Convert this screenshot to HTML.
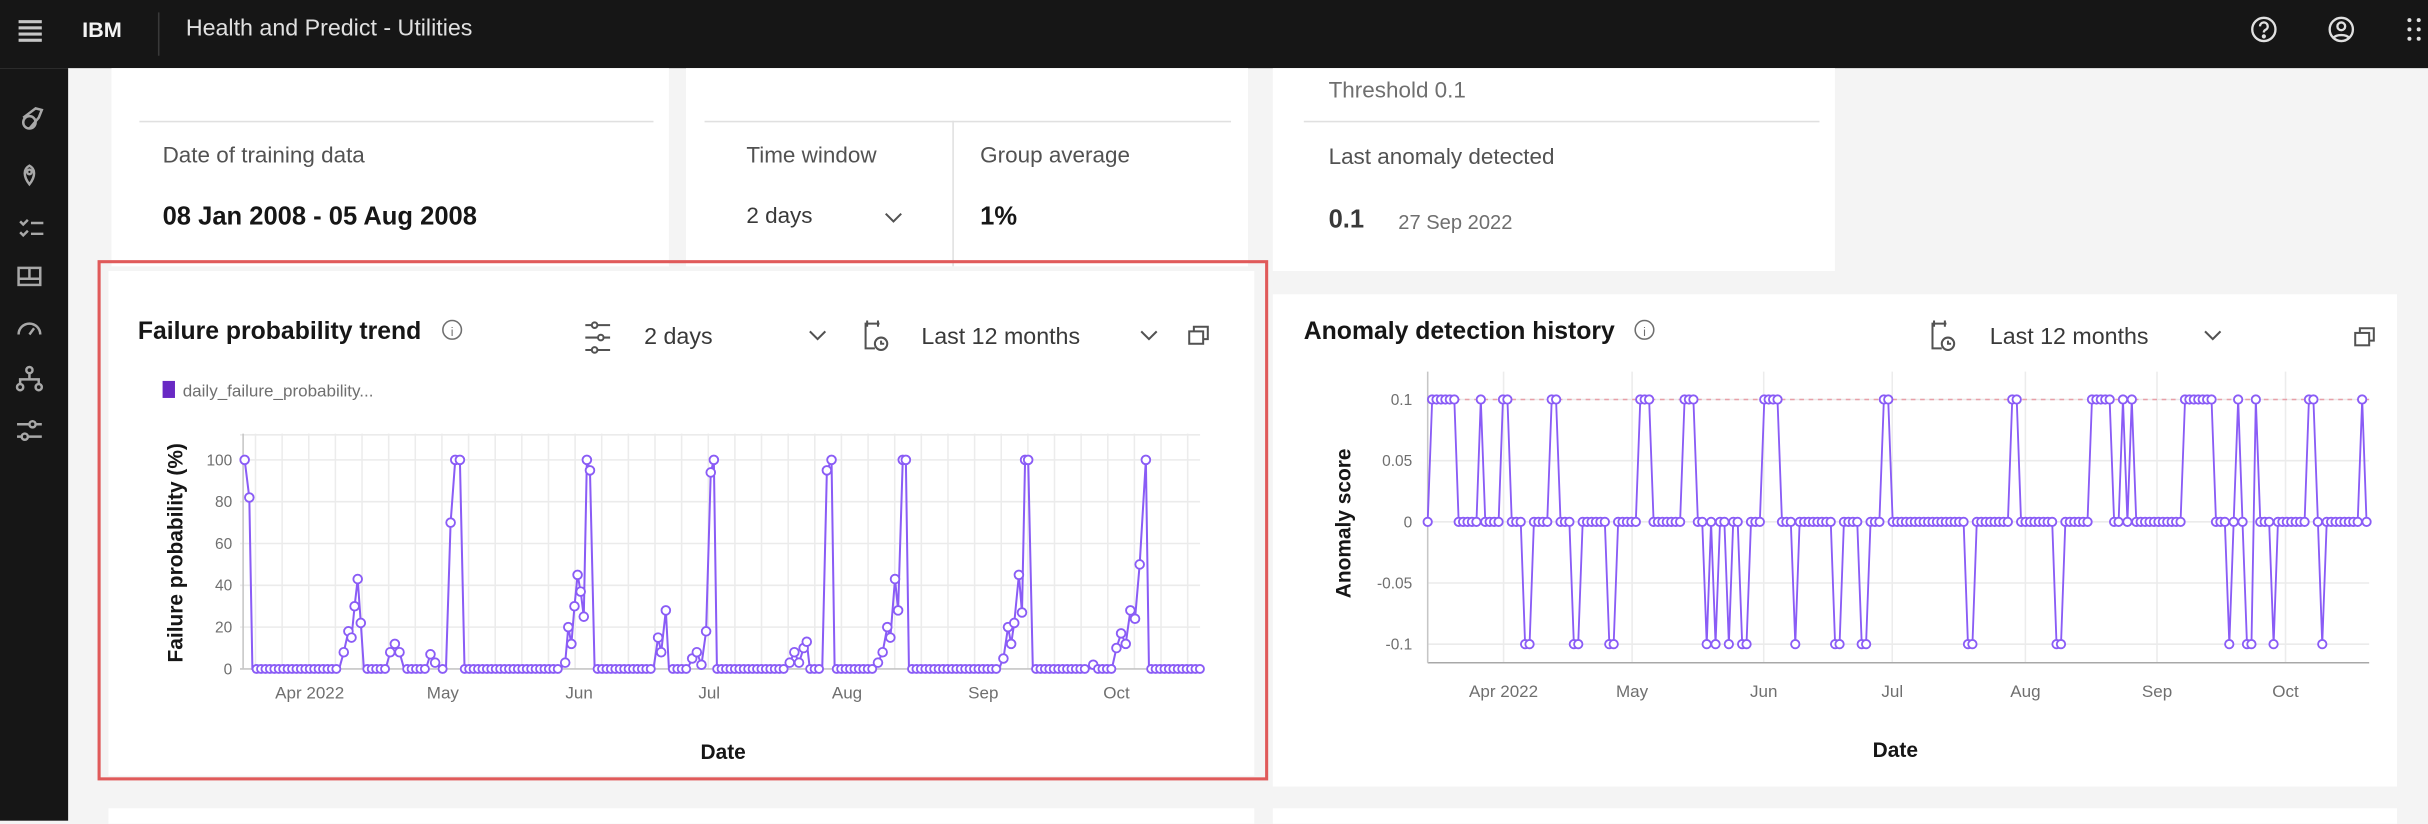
<!DOCTYPE html>
<html><head><meta charset="utf-8">
<style>
*{box-sizing:border-box;margin:0;padding:0}
html,body{width:2428px;height:820px;overflow:hidden;background:#f4f4f4;font-family:"Liberation Sans",sans-serif}
#s{position:absolute;left:0;top:0;width:1568px;height:530px;transform:scale(1.54847);transform-origin:0 0;background:#f4f4f4}
.a{position:absolute}
.card{position:absolute;background:#fff}
.lbl{position:absolute;font-size:14.5px;color:#525252}
.val{position:absolute;font-size:16.5px;font-weight:bold;color:#161616}
.hr{position:absolute;height:1px;background:#e0e0e0}
</style></head><body>
<div id="s">
<div class="a" style="left:0;top:0;width:1568px;height:44px;background:#161616"></div>
<div class="a" style="left:0;top:44px;width:44px;height:486px;background:#161616"></div>
<div class="a" style="left:12px;top:13px;width:15px;height:2px;background:#c6c6c6;box-shadow:0 4px 0 #c6c6c6,0 8px 0 #c6c6c6,0 12px 0 #c6c6c6"></div>
<div class="a" style="left:53px;top:11px;font-size:14px;color:#f4f4f4;font-weight:bold">IBM</div>
<div class="a" style="left:102px;top:8px;width:1px;height:28px;background:#393939"></div>
<div class="a" style="left:120px;top:10px;font-size:15px;color:#e0e0e0">Health and Predict - Utilities</div>
<svg class="a" style="left:1450px;top:8px" width="118" height="24" viewBox="0 0 118 24" fill="none" stroke="#e0e0e0" stroke-width="1.5">
<circle cx="12" cy="11" r="7.5"/><path d="M9.5 9a2.5 2.5 0 1 1 3.5 2.3c-.8.4-1 1-1 1.7"/><circle cx="12" cy="15.5" r=".6" fill="#e0e0e0"/>
<circle cx="62" cy="11" r="7.5"/><circle cx="62" cy="9" r="2.5"/><path d="M57 16.5c1.5-2.5 8.5-2.5 10 0"/>
<g fill="#e0e0e0" stroke="none"><circle cx="106" cy="5" r="1.3"/><circle cx="112" cy="5" r="1.3"/><circle cx="106" cy="11" r="1.3"/><circle cx="112" cy="11" r="1.3"/><circle cx="106" cy="17" r="1.3"/><circle cx="112" cy="17" r="1.3"/></g>
</svg>
<svg class="a" style="left:8px;top:66px" width="28" height="230" viewBox="0 0 28 230" fill="none" stroke="#a8a8a8" stroke-width="1.6">
<circle cx="11" cy="13" r="4"/><path d="M7 10l8-6 4 1-2 5-6 7"/>
<path d="M11 53c-4-5-4-10 0-12 4 2 4 7 0 12z"/><circle cx="11" cy="45" r="1.5"/>
<path d="M5 77l2 2 3-3M12 78h8M5 84l2 2 3-3M12 85h8"/>
<rect x="4" y="107" width="14" height="11"/><path d="M4 114h14M11 107v7"/>
<path d="M4 150a7 7 0 0 1 14 0M11 150l3-4"/>
<circle cx="11" cy="173" r="2"/><circle cx="5" cy="184" r="2"/><circle cx="17" cy="184" r="2"/><path d="M11 175v4M5 182v-3h12v3"/>
<path d="M3 208h16M3 216h16"/><circle cx="13" cy="208" r="2" fill="#161616"/><circle cx="8" cy="216" r="2" fill="#161616"/>
</svg>

<div class="card" style="left:72px;top:44px;width:360px;height:128px"></div>
<div class="hr" style="left:90px;top:78px;width:332px"></div>
<div class="lbl" style="left:105px;top:93px">Date of training data</div>
<div class="val" style="left:105px;top:131px">08 Jan 2008 - 05 Aug 2008</div>

<div class="card" style="left:443px;top:44px;width:363px;height:128px"></div>
<div class="hr" style="left:455px;top:78px;width:340px"></div>
<div class="a" style="left:615px;top:78px;width:1px;height:94px;background:#e0e0e0"></div>
<div class="lbl" style="left:482px;top:93px">Time window</div>
<div class="lbl" style="left:633px;top:93px">Group average</div>
<div class="lbl" style="left:482px;top:132px;color:#393939">2 days</div>
<svg class="a" style="left:571px;top:137px" width="12" height="8" fill="none" stroke="#525252" stroke-width="1.3"><path d="M1 1l5 5 5-5"/></svg>
<div class="val" style="left:633px;top:131px">1%</div>

<div class="card" style="left:822px;top:44px;width:363px;height:131px"></div>
<div class="lbl" style="left:858px;top:51px;color:#6f6f6f">Threshold 0.1</div>
<div class="hr" style="left:842px;top:78px;width:333px"></div>
<div class="lbl" style="left:858px;top:94px">Last anomaly detected</div>
<div class="val" style="left:858px;top:133px;color:#393939">0.1</div>
<div class="a" style="left:903px;top:136px;font-size:13px;color:#6f6f6f">27 Sep 2022</div>

<div class="card" style="left:70px;top:175px;width:740px;height:326px"></div>
<div class="a" style="left:63px;top:168px;width:756px;height:336px;border:2px solid #e05a5a"></div>
<div class="card" style="left:822px;top:190px;width:726px;height:318px"></div>
<div class="card" style="left:70px;top:522px;width:740px;height:10px"></div>
<div class="card" style="left:822px;top:522px;width:726px;height:10px"></div>

<svg id="ch" class="a" style="left:0;top:0" width="1568" height="530" font-family="Liberation Sans, sans-serif">
<text x="89" y="219" font-size="16" font-weight="bold" fill="#161616">Failure probability trend</text>
<circle cx="292" cy="213" r="6" fill="none" stroke="#6f6f6f"/><text x="292" y="217" font-size="8" text-anchor="middle" fill="#6f6f6f">i</text>
<g fill="none" stroke="#525252" stroke-width="1.3">
<path d="M378 210h4M386 210h8M378 218h8M390 218h4M378 226h4M386 226h8"/><circle cx="384" cy="210" r="1.8"/><circle cx="388" cy="218" r="1.8"/><circle cx="384" cy="226" r="1.8"/>
<path d="M523 214l5 5 5-5M737 214l5 5 5-5"/>
<path d="M568 209h-9v16h6M560 207v4M567 207v4"/><circle cx="569" cy="222" r="4"/><path d="M569 220v2h2"/>
<rect x="768" y="214" width="9" height="8"/><path d="M771 214v-3h9v8h-3"/>
<path d="M1424 214l5 5 5-5"/>
<path d="M1257 209h-9v16h6M1249 207v4M1256 207v4"/><circle cx="1258" cy="222" r="4"/><path d="M1258 220v2h2"/>
<rect x="1521" y="215" width="9" height="8"/><path d="M1524 215v-3h9v8h-3"/>
</g>
<text x="416" y="222" font-size="15" fill="#393939">2 days</text>
<text x="595" y="222" font-size="15" fill="#393939">Last 12 months</text>
<rect x="105" y="246" width="8" height="11" fill="#6929c4"/>
<text x="118" y="256" font-size="11" fill="#6f6f6f">daily_failure_probability...</text>
<text x="842" y="219" font-size="16" font-weight="bold" fill="#161616">Anomaly detection history</text>
<circle cx="1062" cy="213" r="6" fill="none" stroke="#6f6f6f"/><text x="1062" y="217" font-size="8" text-anchor="middle" fill="#6f6f6f">i</text>
<text x="1285" y="222" font-size="15" fill="#393939">Last 12 months</text>
<g id="g1"></g><g id="g2"></g>
<text transform="translate(118,357) rotate(-90)" font-size="13.5" font-weight="bold" text-anchor="middle" fill="#161616">Failure probability (%)</text>
<text transform="translate(872,338) rotate(-90)" font-size="13.5" font-weight="bold" text-anchor="middle" fill="#161616">Anomaly score</text>
<text x="467" y="490" font-size="13.5" font-weight="bold" text-anchor="middle" fill="#161616">Date</text>
<text x="1224" y="489" font-size="13.5" font-weight="bold" text-anchor="middle" fill="#161616">Date</text>
</svg>
</div>
<script>
var NS="http://www.w3.org/2000/svg";
function el(p,t,a,txt){var e=document.createElementNS(NS,t);for(var k in a)e.setAttribute(k,a[k]);if(txt)e.textContent=txt;p.appendChild(e);return e;}
var g1=document.getElementById('g1'),g2=document.getElementById('g2');
function y1(v){return 432-v*1.35;}
for(var x=165;x<775;x+=17.2)el(g1,'line',{x1:x,y1:280,x2:x,y2:432,stroke:'#ececec'});
[0,20,40,60,80,100,112].forEach(function(v){el(g1,'line',{x1:155,y1:y1(v),x2:775,y2:y1(v),stroke:v==0?'#c6c6c6':'#ebebeb'});if(v<=100)el(g1,'text',{x:150,y:y1(v)+3.5,'font-size':10,'text-anchor':'end',fill:'#6f6f6f'},''+v);});
el(g1,'line',{x1:157,y1:280,x2:157,y2:432,stroke:'#c6c6c6'});
[['Apr 2022',200],['May',286],['Jun',374],['Jul',458],['Aug',547],['Sep',635],['Oct',721]].forEach(function(a){el(g1,'text',{x:a[1],y:451,'font-size':11,'text-anchor':'middle',fill:'#6f6f6f'},a[0]);});
var K=[[158,100],[161,82],[163,0],[219,0],[222,8],[225,18],[227,15],[229,30],[231,43],[233,22],[235,0],[249,0],[252,8],[255,12],[258,8],[261,0],[275,0],[278,7],[281,3],[285,0],[288,0],[291,70],[294,100],[297,100],[300,0],[362,0],[365,3],[367,20],[369,12],[371,30],[373,45],[375,37],[377,25],[379,100],[381,95],[384,0],[422,0],[425,15],[427,8],[430,28],[432,0],[444,0],[447,5],[450,8],[453,2],[456,18],[459,94],[461,100],[463,0],[507,0],[510,3],[513,8],[516,3],[519,10],[521,13],[523,0],[531,0],[534,95],[537,100],[539,0],[564,0],[567,3],[570,8],[573,20],[575,15],[578,43],[580,28],[583,100],[585,100],[587,0],[645,0],[648,5],[651,20],[653,12],[655,22],[658,45],[660,27],[662,100],[664,100],[667,0],[703,0],[706,2],[709,0],[718,0],[721,10],[724,17],[727,12],[730,28],[733,24],[736,50],[740,100],[742,0],[775,0]];
var d='';K.forEach(function(p,i){d+=(i?'L':'M')+p[0]+' '+y1(p[1]);});
el(g1,'path',{d:d,fill:'none',stroke:'#8a5cf6','stroke-width':1.3});
function interp(x){for(var i=1;i<K.length;i++){if(x<=K[i][0]){var a=K[i-1],b=K[i];return a[1]+(b[1]-a[1])*(x-a[0])/(b[0]-a[0]);}}return 0;}
K.forEach(function(p){if(p[1]>0)el(g1,'circle',{cx:p[0],cy:y1(p[1]),r:2.8,fill:'#fff',stroke:'#8a5cf6','stroke-width':1.2});});
for(var x=160;x<775;x+=2.86){if(interp(x)==0)el(g1,'circle',{cx:x,cy:y1(0),r:2.6,fill:'#fff',stroke:'#8a5cf6','stroke-width':1.2});}
function y2(v){return 337-v*790;}
[971,1054,1139,1222,1308,1393,1476].forEach(function(x){el(g2,'line',{x1:x,y1:240,x2:x,y2:428,stroke:'#ececec'});});
[[0.1,'0.1'],[0.05,'0.05'],[0,'0'],[-0.05,'-0.05'],[-0.1,'-0.1']].forEach(function(a){el(g2,'line',{x1:922,y1:y2(a[0]),x2:1530,y2:y2(a[0]),stroke:'#ebebeb'});el(g2,'text',{x:912,y:y2(a[0])+3.5,'font-size':10,'text-anchor':'end',fill:'#6f6f6f'},a[1]);});
el(g2,'line',{x1:922,y1:428,x2:1530,y2:428,stroke:'#a8a8a8'});
el(g2,'line',{x1:922,y1:240,x2:922,y2:428,stroke:'#c6c6c6'});
el(g2,'line',{x1:922,y1:y2(0.1),x2:1530,y2:y2(0.1),stroke:'#e8a0a8','stroke-dasharray':'3 3'});
[['Apr 2022',971],['May',1054],['Jun',1139],['Jul',1222],['Aug',1308],['Sep',1393],['Oct',1476]].forEach(function(a){el(g2,'text',{x:a[1],y:450,'font-size':11,'text-anchor':'middle',fill:'#6f6f6f'},a[0]);});
var P=[925,928,931,934,937,940,957,972,1002,1006,1060,1063,1066,1087,1090,1093,1138,1141,1144,1147,1216,1219,1300,1303,1350,1353,1356,1359,1362,1370,1376,1412,1415,1418,1421,1424,1427,1445,1458,1491,1494,1526];
var M=[985,987,1016,1018,1040,1042,1102,1107,1116,1125,1127,1160,1185,1188,1203,1206,1271,1273,1329,1331,1440,1452,1454,1468,1499];
var pts=[];for(var x=922;x<=1530;x+=2.86){var v=0;P.forEach(function(p){if(Math.abs(p-x)<1.5)v=0.1;});M.forEach(function(p){if(Math.abs(p-x)<1.5)v=-0.1;});pts.push([x,v]);}
var d2='';pts.forEach(function(p,i){d2+=(i?'L':'M')+p[0].toFixed(1)+' '+y2(p[1]);});
el(g2,'path',{d:d2,fill:'none',stroke:'#8a5cf6','stroke-width':1.2});
pts.forEach(function(p){el(g2,'circle',{cx:p[0],cy:y2(p[1]),r:2.7,fill:'#fff',stroke:'#8a5cf6','stroke-width':1.2});});
</script>
</body></html>
